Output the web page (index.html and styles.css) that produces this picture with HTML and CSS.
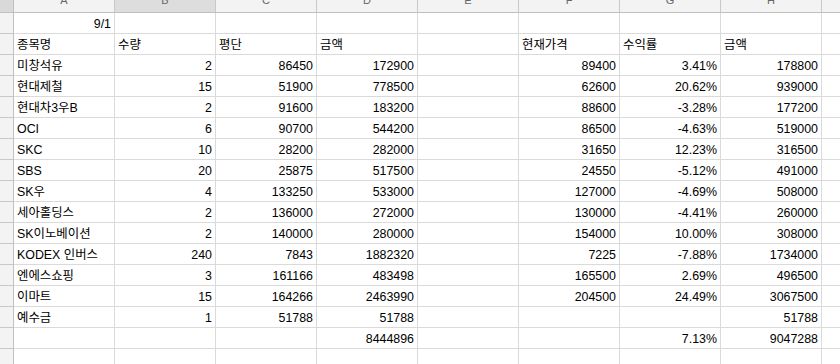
FILE: index.html
```html
<!DOCTYPE html>
<html lang="ko">
<head>
    <meta charset="UTF-8">
    <title>주식 현황</title>
    <link rel="stylesheet" href="styles.css">
</head>
<body>
    <div class="sheet" id="sheet">
        <div class="corner"></div>
        <div class="colhead">A</div>
        <div class="colhead active">B</div>
        <div class="colhead">C</div>
        <div class="colhead">D</div>
        <div class="colhead">E</div>
        <div class="colhead">F</div>
        <div class="colhead">G</div>
        <div class="colhead">H</div>
        <div class="colhead">I</div>
    </div>

    <script>
        // A..H, null means empty cell
        const rows = [
            ['9/1', null, null, null, null, null, null, null],
            [':종목명', ':수량', ':평단', ':금액', null, ':현재가격', ':수익률', ':금액'],
            [':미창석유', '2', '86450', '172900', null, '89400', '3.41%', '178800'],
            [':현대제철', '15', '51900', '778500', null, '62600', '20.62%', '939000'],
            [':현대차3우B', '2', '91600', '183200', null, '88600', '-3.28%', '177200'],
            [':OCI', '6', '90700', '544200', null, '86500', '-4.63%', '519000'],
            [':SKC', '10', '28200', '282000', null, '31650', '12.23%', '316500'],
            [':SBS', '20', '25875', '517500', null, '24550', '-5.12%', '491000'],
            [':SK우', '4', '133250', '533000', null, '127000', '-4.69%', '508000'],
            [':세아홀딩스', '2', '136000', '272000', null, '130000', '-4.41%', '260000'],
            [':SK이노베이션', '2', '140000', '280000', null, '154000', '10.00%', '308000'],
            [':KODEX 인버스', '240', '7843', '1882320', null, '7225', '-7.88%', '1734000'],
            [':엔에스쇼핑', '3', '161166', '483498', null, '165500', '2.69%', '496500'],
            [':이마트', '15', '164266', '2463990', null, '204500', '24.49%', '3067500'],
            [':예수금', '1', '51788', '51788', null, null, null, '51788'],
            [null, null, null, '8444896', null, null, '7.13%', '9047288'],
            [null, null, null, null, null, null, null, null]
        ];

        const sheet = document.getElementById('sheet');
        rows.forEach(row => {
            const head = document.createElement('div');
            head.className = 'rowhead';
            sheet.appendChild(head);
            row.concat([null]).forEach(value => {
                const cell = document.createElement('div');
                cell.className = 'cell';
                if (value !== null) {
                    // a leading ':' marks text, everything else is a number
                    if (value.startsWith(':')) {
                        cell.textContent = value.slice(1);
                    } else {
                        cell.textContent = value;
                        cell.classList.add('num');
                    }
                }
                sheet.appendChild(cell);
            });
        });
    </script>
</body>
</html>
```

FILE: styles.css
```css
body {
    margin: 0;
    overflow: hidden;
    background: #fff;
    font-family: 'Liberation Sans', Arial, 'Noto Sans CJK KR', sans-serif;
    font-size: 12.4px;
    color: #000;
}

.sheet {
    display: grid;
    grid-template-columns: 14px repeat(9, 101px);
    grid-auto-rows: 21px;
    margin-top: -8px;
}

.corner {
    background: #d9d9d9;
    border-right: 1px solid #c0c0c0;
    border-bottom: 1px solid #c0c0c0;
}

.colhead {
    background: #f3f3f3;
    border-right: 1px solid #c8c8c8;
    border-bottom: 1px solid #c0c0c0;
    color: #666;
    font-size: 11px;
    text-align: center;
    line-height: 16px;
}

.colhead.active {
    background: #dddddd;
}

.rowhead {
    background: #f3f3f3;
    border-right: 1px solid #c0c0c0;
    border-bottom: 1px solid #c8c8c8;
}

.cell {
    border-right: 1px solid #dadada;
    border-bottom: 1px solid #dadada;
    padding: 0 3px 1.5px 3px;
    line-height: 15px;
    display: flex;
    align-items: flex-end;
    white-space: nowrap;
    overflow: hidden;
}

.cell.num {
    justify-content: flex-end;
}

.sheet > div {
    box-sizing: border-box;
}
```
